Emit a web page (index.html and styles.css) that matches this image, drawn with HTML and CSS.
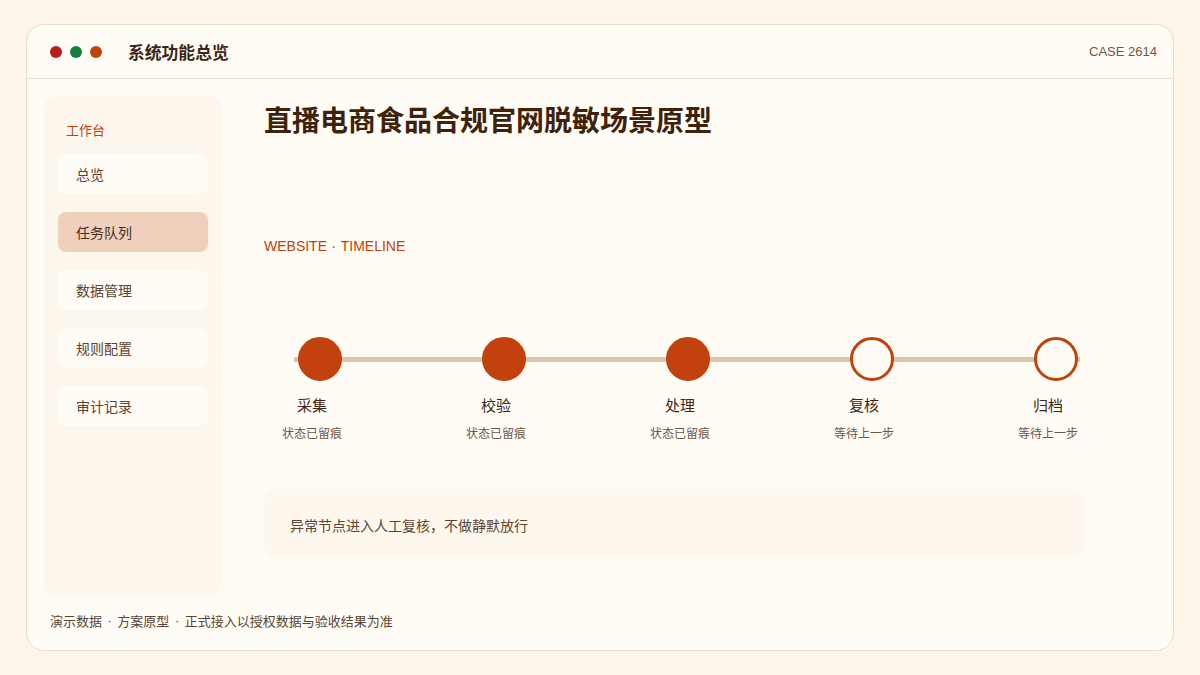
FILE: index.html
```html
<!DOCTYPE html>
<html lang="zh">
<head>
<meta charset="utf-8">
<link rel="stylesheet" href="styles.css">
</head>
<body>
<div class="frame">
  <header class="topbar">
    <div class="dots"><span class="dot red"></span><span class="dot green"></span><span class="dot orange"></span></div>
    <div class="app-title">系统功能总览</div>
    <div class="case">CASE 2614</div>
  </header>
  <div class="body">
    <aside class="sidebar">
      <div class="side-head">工作台</div>
      <div class="nav-item">总览</div>
      <div class="nav-item active">任务队列</div>
      <div class="nav-item">数据管理</div>
      <div class="nav-item">规则配置</div>
      <div class="nav-item">审计记录</div>
    </aside>
    <main class="main">
      <h1 class="title">直播电商食品合规官网脱敏场景原型</h1>
      <div class="eyebrow">WEBSITE<span class="sep">·</span>TIMELINE</div>
      <div class="timeline">
        <div class="track"></div>
        <div class="step"><div class="node done"></div><div class="step-name">采集</div><div class="step-sub">状态已留痕</div></div>
        <div class="step"><div class="node done"></div><div class="step-name">校验</div><div class="step-sub">状态已留痕</div></div>
        <div class="step"><div class="node done"></div><div class="step-name">处理</div><div class="step-sub">状态已留痕</div></div>
        <div class="step"><div class="node"></div><div class="step-name">复核</div><div class="step-sub">等待上一步</div></div>
        <div class="step"><div class="node"></div><div class="step-name">归档</div><div class="step-sub">等待上一步</div></div>
      </div>
      <div class="note">异常节点进入人工复核，不做静默放行</div>
    </main>
  </div>
  <footer class="foot">演示数据<span class="sep">·</span>方案原型<span class="sep">·</span>正式接入以授权数据与验收结果为准</footer>
</div>
</body>
</html>
```

FILE: styles.css
```css
* { box-sizing: border-box; margin: 0; padding: 0; }
html, body { width: 1200px; height: 675px; }
body {
  background: #fdf5ea;
  font-family: "Liberation Sans", "Noto Sans CJK SC", sans-serif;
  color: #3d2614;
  padding: 24px 26px;
}
.frame {
  width: 1148px;
  height: 627px;
  background: #fffcf6;
  border: 1px solid #e6dccb;
  border-radius: 18px;
  display: flex;
  flex-direction: column;
  overflow: hidden;
}
.topbar {
  height: 54px;
  flex: none;
  border-bottom: 1px solid #eadfcf;
  display: flex;
  align-items: center;
  padding: 0 16px 0 23px;
}
.dots { display: flex; gap: 8px; }
.dot { width: 12px; height: 12px; border-radius: 50%; display: block; }
.red { background: #b91c1c; }
.green { background: #15803d; }
.orange { background: #c2410c; }
.app-title {
  margin-left: 26px;
  font-size: 16.8px;
  font-weight: 700;
  color: #3d2614;
}
.case {
  margin-left: auto;
  font-size: 13px;
  color: #6b5848;
}
.body {
  flex: 1;
  display: flex;
  padding: 17px 0 0 17px;
  min-height: 0;
}
.sidebar {
  width: 177px;
  flex: none;
  background: #fdf6ec;
  border-radius: 12px;
  padding: 25px 13px 0 14px;
  display: flex;
  flex-direction: column;
  gap: 18px;
}
.side-head {
  font-size: 13px;
  color: #c2410c;
  padding-left: 8px;
  line-height: 20px;
  margin-bottom: -5px;
}
.nav-item {
  height: 40px;
  border-radius: 8px;
  background: #fffbf5;
  font-size: 14px;
  color: #5a4433;
  padding-left: 18px;
  display: flex;
  align-items: center;
}
.nav-item.active { background: #f0cfbc; color: #4a2e1c; }
.main {
  flex: none;
  width: 820px;
  margin-left: 43px;
  display: flex;
  flex-direction: column;
}
.title {
  font-size: 28px;
  font-weight: 700;
  color: #3f220c;
  line-height: 40px;
  margin-top: 6px;
}
.eyebrow {
  margin-top: 94px;
  font-size: 14px;
  color: #c2410c;
  line-height: 20px;
}
.sep { padding: 0 4.5px; }
.timeline {
  position: relative;
  margin-top: 81px;
  display: flex;
  justify-content: space-between;
  padding: 0 6px 0 18px;
}
.track {
  position: absolute;
  left: 30px;
  right: 4px;
  top: 20px;
  height: 5px;
  background: #d9c7ab;
}
.step {
  width: 60px;
  display: flex;
  flex-direction: column;
  align-items: center;
  position: relative;
}
.node {
  width: 44px;
  height: 44px;
  border-radius: 50%;
  border: 3px solid #c2410c;
  background: #fffcf6;
  margin-left: 16px;
}
.node.done { background: #c2410c; }
.step-name {
  margin-top: 14px;
  font-size: 15px;
  color: #3d2614;
  line-height: 22px;
}
.step-sub {
  margin-top: 8px;
  font-size: 12px;
  color: #6b5848;
  line-height: 18px;
}
.note {
  margin-top: 46px;
  height: 69px;
  background: #fdf7ee;
  border-radius: 10px;
  font-size: 14px;
  color: #5a4433;
  padding: 2px 0 0 26px;
  display: flex;
  align-items: center;
}
.foot {
  flex: none;
  height: 54px;
  padding: 0 0 5px 23px;
  font-size: 13px;
  color: #5a4433;
  display: flex;
  align-items: center;
}
.foot .sep { padding: 0 5.5px; }
```
